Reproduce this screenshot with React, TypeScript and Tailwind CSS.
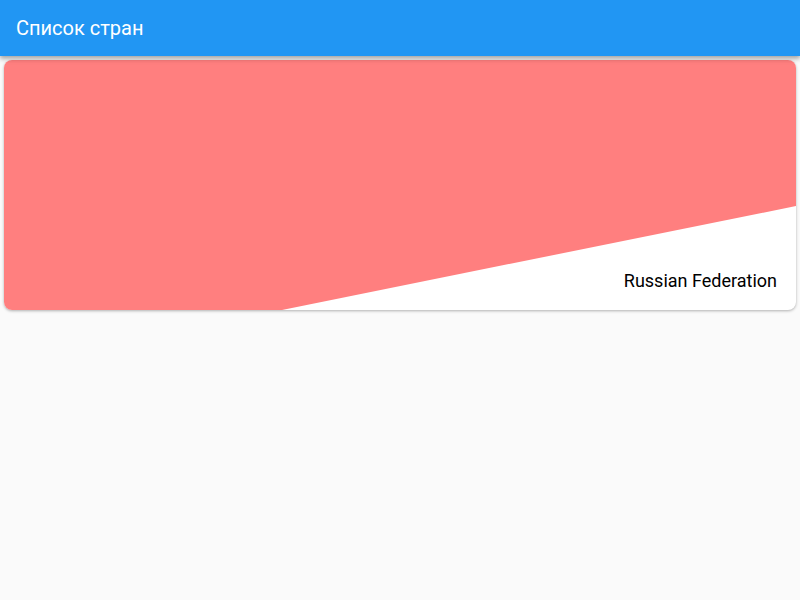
import React from 'react';

const countries = [{name: 'Russian Federation', color: '#ff7f7f'}];

export default function App() {
  return (
    <div className="min-h-[600px] bg-[#fafafa] font-['Roboto',sans-serif]">
      <header className="relative z-10 h-14 bg-[#2196f3] flex items-center px-4 shadow-[0_2px_4px_rgba(0,0,0,0.25),0_4px_5px_rgba(0,0,0,0.12)]">
        <h1 className="text-white text-[20px] font-normal">Список стран</h1>
      </header>
      <main className="p-1">
        {countries.map((c) => (
          <div
            key={c.name}
            className="relative h-[250px] bg-white rounded-lg overflow-hidden shadow-[0_1px_3px_rgba(0,0,0,0.3)]"
          >
            <svg
              className="absolute inset-0 w-full h-full"
              viewBox="0 0 792 250"
              preserveAspectRatio="none"
            >
              <polygon points="0,0 792,0 792,146 278,250 0,250" fill={c.color} />
            </svg>
            <div className="relative h-full flex items-end justify-end px-[19px] pb-[17px]">
              <span className="text-[18px] leading-[24px] text-black">{c.name}</span>
            </div>
          </div>
        ))}
      </main>
    </div>
  );
}
